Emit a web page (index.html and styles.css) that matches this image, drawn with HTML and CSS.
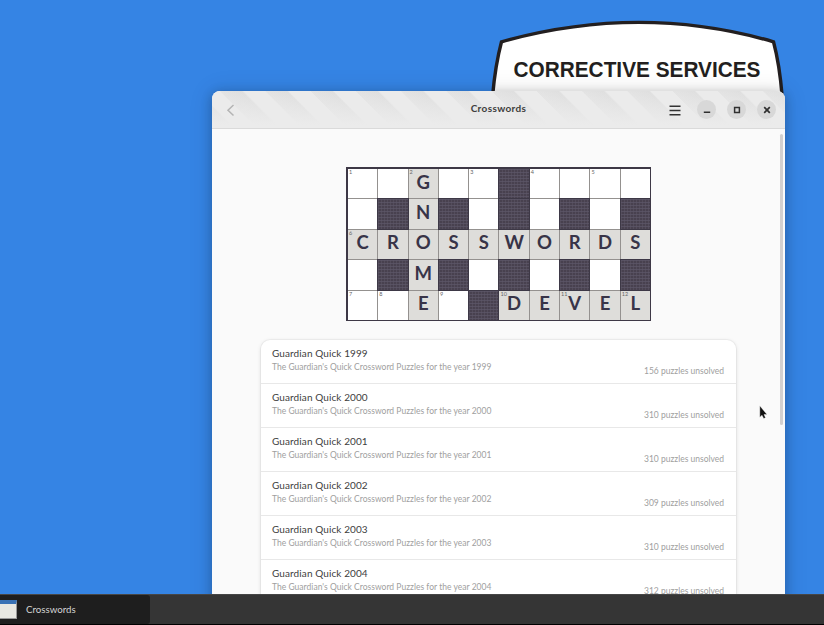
FILE: index.html
```html
<!DOCTYPE html>
<html lang="en">
<head>
<meta charset="utf-8">
<title>Crosswords</title>
<link rel="stylesheet" href="styles.css">
</head>
<body>
<div class="desktop">
  <svg class="badge" width="300" height="86" viewBox="488 10 300 86">
    <path d="M491.500 110Q494 70 501.500 41.800Q640 3 773.500 41.800Q781 70 783 110Z" fill="#fff" stroke="#231f20" stroke-width="3.400"/>
    <text x="513.500" y="77.300" textLength="247" lengthAdjust="spacingAndGlyphs">CORRECTIVE SERVICES</text>
  </svg>
  <main class="window">
    <header class="header">
      <svg class="back" width="10" height="14" viewBox="0 0 10 14"><path d="M7.500 2L2 7.200L7.500 12.500" fill="none" stroke="#b4b4b4" stroke-width="1.500"/></svg>
      <h1>Crosswords</h1>
      <div class="controls">
        <svg class="menu" width="12" height="12" viewBox="0 0 12 12"><path d="M.5 2.300H11.500M.5 6.500H11.500M.5 10.700H11.500" stroke="#333" stroke-width="1.400"/></svg>
        <span class="control"><svg width="10" height="10" viewBox="0 0 10 10"><path d="M1.800 7.200H8.200" stroke="#303030" stroke-width="1.600"/></svg></span>
        <span class="control"><svg width="10" height="10" viewBox="0 0 10 10"><path d="M2.600 2.600H7.400V7.400H2.600Z" fill="none" stroke="#303030" stroke-width="1.500"/></svg></span>
        <span class="control"><svg width="10" height="10" viewBox="0 0 10 10"><path d="M2.200 2.200L7.800 7.800M7.800 2.200L2.200 7.800" stroke="#303030" stroke-width="1.700"/></svg></span>
      </div>
    </header>
    <section class="content">
      <div class="puzzle" id="puzzle"></div>
      <ul class="list" id="list"></ul>
    </section>
    <div class="scrollbar"></div>
  </main>
  <svg class="cursor" width="10" height="16" viewBox="0 0 10 16"><path d="M.8.8V12.300L3 10.200L4.700 13.600L6.500 12.700L5 9.500H8Z" fill="#111" stroke="#fff" stroke-opacity=".6" stroke-width=".6"/></svg>
  <footer class="taskbar"><div class="task"><span class="thumb"></span><span class="task-name">Crosswords</span></div></footer>
</div>
<script src="app.js"></script>
</body>
</html>
```
FILE: styles.css
```css
* { box-sizing: border-box; }
body { margin: 0; font-family: Lato, "Open Sans", sans-serif; }
.desktop { position: relative; width: 824px; height: 625px; overflow: hidden; background: #3584e4; }
.badge { position: absolute; left: 488px; top: 10px; }
.badge text { font: bold 21.500px "Liberation Sans", sans-serif; fill: #231f20; }
.window {
  position: absolute; left: 212px; top: 91px; width: 573px; height: 540px;
  display: flex; flex-direction: column; overflow: hidden;
  background: #fafafa; border-radius: 8px 8px 0 0;
  box-shadow: 0 2px 10px 2px rgba(0,0,0,.17), 0 1px 22px 4px rgba(0,0,0,.08);
}
.header {
  display: flex; align-items: center; justify-content: space-between; flex: none;
  position: relative; height: 38px; padding: 0 9px 0 14px; border-bottom: 1px solid #dadada;
  background:
    linear-gradient(to bottom, rgba(235,235,235,0) 0%, #ebebeb 92%),
    repeating-linear-gradient(45deg, #e3e3e3 0, #dfdfdf 15px, #ebebeb 16.500px 31.500px, #e3e3e3 32px);
}
.header h1 {
  position: absolute; left: 0; right: 0; top: 10px; margin: 0; text-align: center;
  font-size: 10px; line-height: 15px; color: #3d3d3d; letter-spacing: .36px;
}
.controls { display: flex; align-items: center; gap: 11px; }
.menu { margin-right: 5px; }
.control { display: grid; place-items: center; width: 19px; height: 19px; border-radius: 50%; background: #d8d8d8; }
.content { display: flex; flex-direction: column; align-items: center; padding-top: 38px; }
.puzzle {
  display: grid; grid-template-columns: repeat(10, 1fr); grid-template-rows: repeat(5, 1fr);
  width: 305px; height: 154px; border: 2px solid #3d3846; border-width: 2px 1px 1px 2px;
  gap: 1px; background: #94918f;
}
.cell { position: relative; display: grid; place-items: center; background: #fff; font-weight: bold; font-size: 18.500px; line-height: 24px; color: #383448; padding-bottom: 4px; }
.cell.lit { background: #deddda; }
.cell.block {
  background: repeating-linear-gradient(90deg, rgba(94,88,103,.5) 0 1px, transparent 1px 3px),
    repeating-linear-gradient(#575162 0 1px, #48414f 1px 3px);
  box-shadow: 0 0 0 1px #3d3846;
}
.cell small { position: absolute; left: 1px; top: 0; font-size: 5.500px; line-height: 7px; font-weight: normal; color: #666; }
.list {
  width: 475px; margin: 19px 0 0; padding: 0; list-style: none;
  background: #fff; border-radius: 9px 9px 0 0; box-shadow: 0 0 0 1px rgba(0,0,0,.03), 0 1px 4px rgba(0,0,0,.13);
}
.row { display: flex; justify-content: space-between; height: 44px; padding: 6px 12px 0 11px; border-bottom: 1px solid #e8e8e8; white-space: nowrap; }
.title { font-size: 10px; line-height: 14px; color: #404040; letter-spacing: .1px; }
.sub { margin-top: 1px; font-size: 8.500px; line-height: 12px; color: #a0a0a0; letter-spacing: .02px; }
.count { align-self: flex-end; font-size: 8.500px; line-height: 12px; padding-bottom: 6px; color: #a0a0a0; }
.scrollbar { position: absolute; right: 2px; top: 43px; width: 3px; height: 291px; border-radius: 2px; background: #d2d0d0; }
.cursor { position: absolute; left: 759px; top: 405px; }
.taskbar { position: absolute; left: 0; top: 594px; width: 824px; height: 31px; background: #353535; border-top: 1px solid #464646; border-bottom: 1px solid #000; }
.task { display: flex; align-items: center; gap: 9px; width: 150px; height: 29px; background: #1e1e1e; border-radius: 0 3px 3px 0; }
.task-name { color: #d4d4d4; font-size: 9.700px; line-height: 14px; padding-bottom: 2px; }
.thumb { width: 17px; height: 19px; background: #e8e8e2; border-top: 4px solid #3972b5; border-right: 1px solid #999; border-bottom: 1px solid #999; }
```
FILE: app.js
```js
const board = ["..G..#....", ".#N#.#.#.#", "CROSSWORDS", ".#M#.#.#.#", "..E.#DEVEL"];
const clues = { "0,0": 1, "0,2": 2, "0,4": 3, "0,6": 4, "0,8": 5, "2,0": 6, "4,0": 7, "4,1": 8, "4,3": 9, "4,5": 10, "4,7": 11, "4,9": 12 };
document.getElementById("puzzle").innerHTML = board.map((line, r) => [...line].map((ch, c) => {
  const kind = ch === "#" ? " block" : ch === "." ? "" : " lit";
  const clue = clues[r + "," + c];
  return `<div class="cell${kind}">${clue ? `<small>${clue}</small>` : ""}${/[A-Z]/.test(ch) ? `<span>${ch}</span>` : ""}</div>`;
}).join("")).join("");
const counts = [156, 310, 310, 309, 310, 312];
document.getElementById("list").innerHTML = counts.map((n, i) => `<li class="row"><div><div class="title">Guardian Quick ${1999 + i}</div><div class="sub">The Guardian's Quick Crossword Puzzles for the year ${1999 + i}</div></div><div class="count">${n} puzzles unsolved</div></li>`).join("");
```
